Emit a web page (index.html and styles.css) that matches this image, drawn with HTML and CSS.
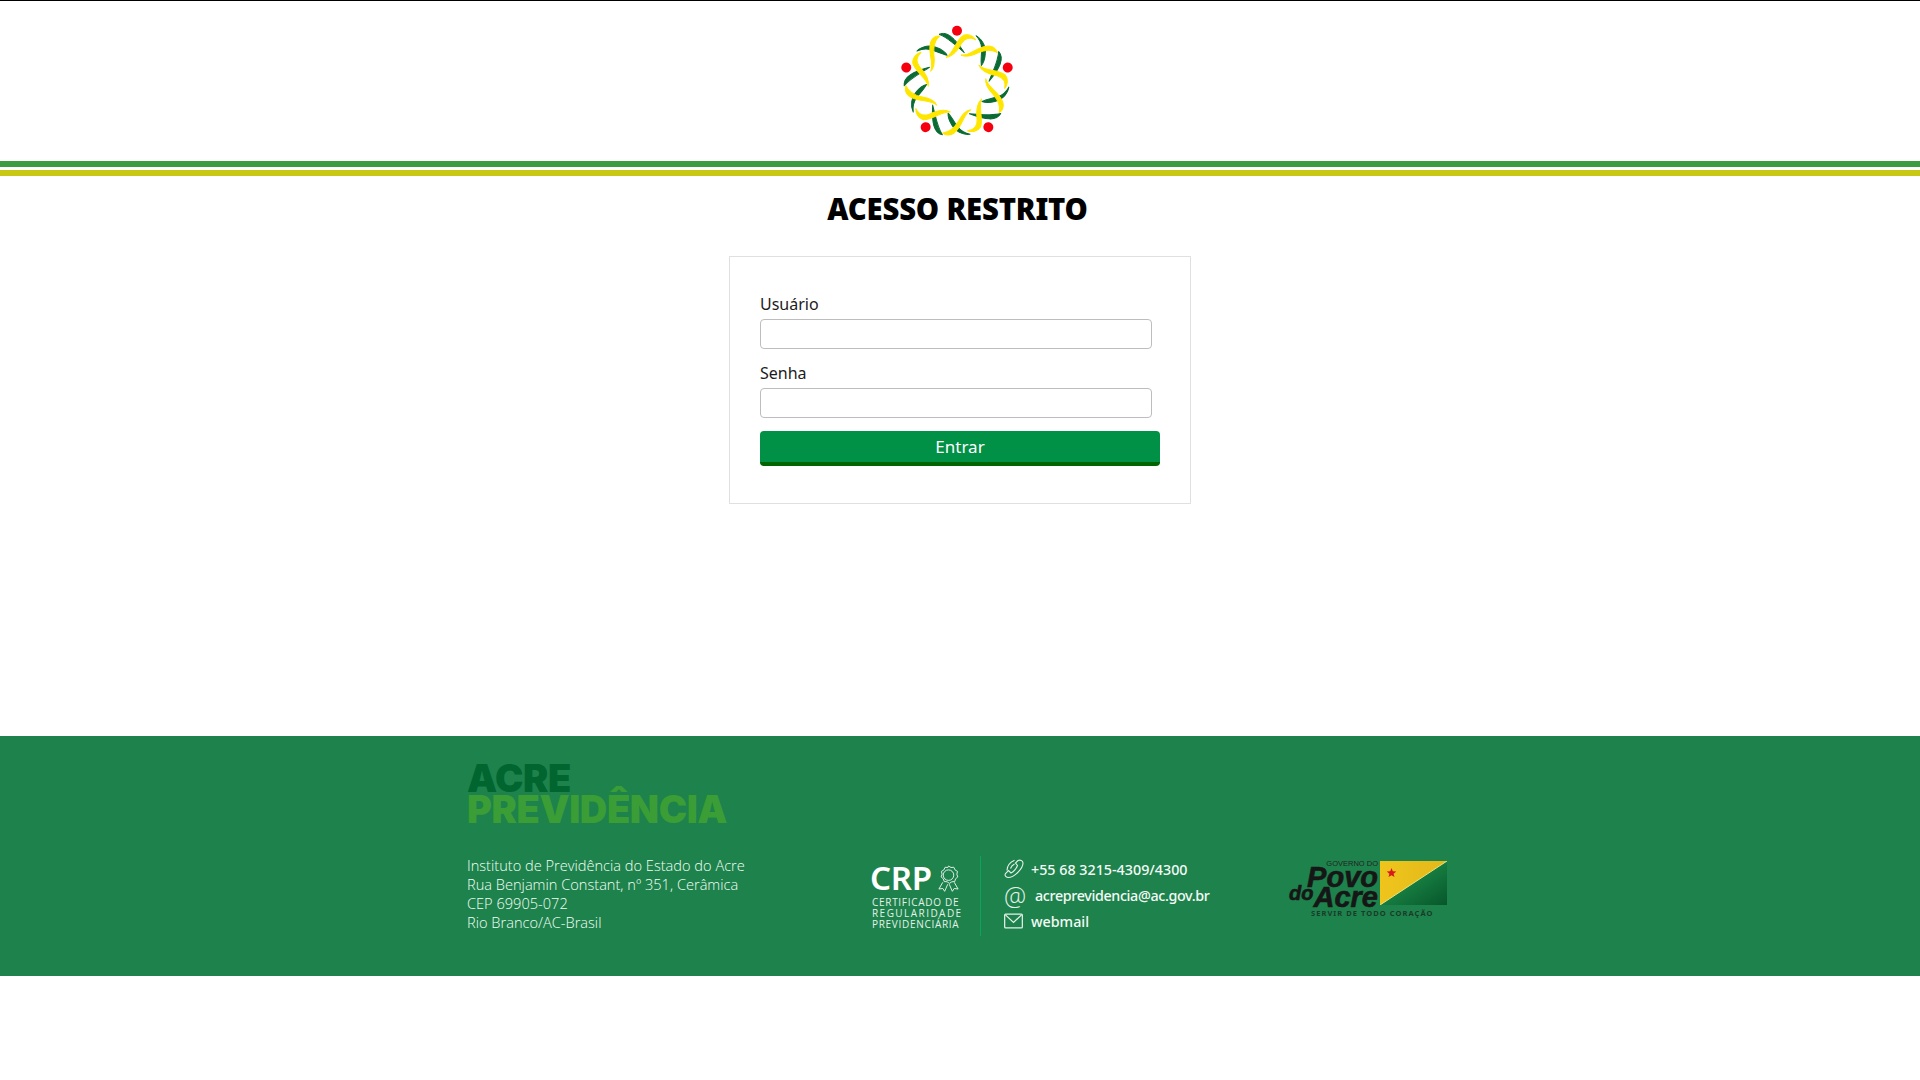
FILE: index.html
```html
<!DOCTYPE html>
<html lang="pt-BR">
<head>
<meta charset="utf-8">
<title>Acesso restrito</title>
<link rel="stylesheet" href="styles.css">
</head>
<body>
<header class="top">
  <svg class="emblem" viewBox="111 72 360 360" aria-hidden="true">
    <defs>
      <g id="sector">
        <path class="rib-g" d="M237 103C262 92 285 115 313 158C285 135 262 112 237 103Z"/>
        <path class="rib-y" d="M258 172C280 160 288 120 310 106C325 100 340 108 348 120C330 110 315 115 305 130C295 148 280 170 258 172Z"/>
        <path class="rib-g" d="M348 107C368 118 378 140 376 160C375 178 370 190 364 197C362 180 365 160 365 145C364 130 358 118 348 107Z"/>
        <path class="rib-y" d="M303 165C330 168 350 140 385 138C400 138 410 148 412 158C395 148 375 150 355 158C335 168 315 172 303 165Z"/>
        <circle fill="#f5000f" cx="291" cy="92" r="15"/>
      </g>
    </defs>
    <use href="#sector"/>
    <use href="#sector" transform="rotate(72 291 252)"/>
    <use href="#sector" transform="rotate(144 291 252)"/>
    <use href="#sector" transform="rotate(216 291 252)"/>
    <use href="#sector" transform="rotate(288 291 252)"/>
  </svg>
</header>
<div class="stripes"><div class="stripe-green"></div><div class="stripe-yellow"></div></div>
<main class="main">
  <h1 class="title">ACESSO RESTRITO</h1>
  <form class="card">
    <label class="label" for="usuario">Usuário</label>
    <input class="field" id="usuario" type="text">
    <label class="label label-next" for="senha">Senha</label>
    <input class="field" id="senha" type="password">
    <button class="submit" type="button">Entrar</button>
  </form>
</main>
<footer class="footer">
  <div class="col-about">
    <div class="brand"><span class="brand-a">ACRE</span><span class="brand-b">PREVIDÊNCIA</span></div>
    <p class="address">Instituto de Previdência do Estado do Acre<br>Rua Benjamin Constant, nº 351, Cerâmica<br>CEP 69905-072<br>Rio Branco/AC-Brasil</p>
  </div>
  <div class="col-crp">
    <div class="crp-head">
      <span class="crp-name">CRP</span>
      <svg class="rosette" viewBox="0 0 24 28" aria-hidden="true">
        <g fill="none" stroke="#e4f2ea" stroke-width="1">
          <path d="M12 1l2.6 1.5 3-.2 1.2 2.7 2.6 1.6-.7 2.9 1 2.9-2.3 1.9-.9 2.9-3 .2-2.5 1.7-2.5-1.7-3-.2-.9-2.9-2.3-1.9 1-2.9-.7-2.9 2.6-1.6 1.2-2.7 3 .2z"/>
          <circle cx="12" cy="10.5" r="5.5"/>
          <path d="M6 18l-4 7 4-.6 2 3 3.2-7.4M18 18l4 7-4-.6-2 3-3.2-7.4"/>
        </g>
      </svg>
    </div>
    <div class="crp-sub"><span>CERTIFICADO DE</span><span class="crp-wide">REGULARIDADE</span><span>PREVIDENCIÁRIA</span></div>
  </div>
  <ul class="contacts">
    <li class="contact">
      <svg class="contact-icon" viewBox="0 0 20 20" aria-hidden="true"><path fill="none" stroke="#e4f2ea" stroke-width="1.100" d="M14 1.500C16 .5 19 1.500 19 4C19 9 11 18.500 4 18.500C1.500 18.500 .5 16 1.500 14.500L4.500 11.500L7 14C10 12.500 12.500 9 13.500 6.500L11.500 4ZM3 11.500C3 7 6.500 3 10.500 1.200M6.500 9.500C7.200 7.500 8.500 6 10.500 5"/></svg>
      <span>+55 68 3215-4309/4300</span>
    </li>
    <li class="contact">
      <span class="contact-at">@</span>
      <span class="contact-mail">acreprevidencia@ac.gov.br</span>
    </li>
    <li class="contact">
      <svg class="contact-icon contact-env" viewBox="0 0 20 16" aria-hidden="true"><rect x=".7" y=".7" width="18.600" height="14.600" rx="1" fill="none" stroke="#e4f2ea" stroke-width="1.300"/><path d="M1.500 1.500L10 9.500L18.500 1.500" fill="none" stroke="#e4f2ea" stroke-width="1.300"/></svg>
      <span>webmail</span>
    </li>
  </ul>
  <div class="gov">
    <div class="gov-words">
      <span class="gov-top">GOVERNO DO</span>
      <span class="gov-povo">Povo</span>
      <span class="gov-acre"><small class="gov-do">do</small>Acre</span>
    </div>
    <svg class="flag" viewBox="0 0 67 44" aria-hidden="true">
      <defs>
        <linearGradient id="flag-g" x1="0" y1="0" x2="1" y2="1"><stop offset=".45" stop-color="#178042"/><stop offset="1" stop-color="#07562b"/></linearGradient>
        <linearGradient id="flag-y" x1="0" y1="0" x2="1" y2="0"><stop offset="0" stop-color="#efc51c"/><stop offset="1" stop-color="#e3b81a"/></linearGradient>
      </defs>
      <rect width="67" height="44" fill="url(#flag-g)"/>
      <path d="M0 0H67L0 44Z" fill="url(#flag-y)"/>
      <path d="M0 44L67 0" stroke="#e9e27a" stroke-width="1"/>
      <path d="M11.500 7l1.300 3.300 3.500.2-2.700 2.200.9 3.400-3-1.900-3 1.900.9-3.400-2.700-2.200 3.500-.2z" fill="#d8181d"/>
    </svg>
    <span class="gov-motto">SERVIR DE TODO CORAÇÃO</span>
  </div>
</footer>
</body>
</html>
```
FILE: styles.css
```css
* { box-sizing: border-box; }
html, body { margin: 0; padding: 0; }
body { background: #fff; font-family: "Noto Sans", "Open Sans", sans-serif; color: #111; border-top: 1px solid #000; }
.top { height: 160px; display: flex; justify-content: center; align-items: flex-start; padding: 23px 6px 0 0; }
.emblem { width: 120px; height: 120px; }
.rib-g { fill: #0b6b34; stroke: #0b6b34; stroke-width: 3; stroke-linejoin: round; }
.rib-y { fill: #ffe600; stroke: #ffe600; stroke-width: 3; stroke-linejoin: round; }
.stripes { display: flex; flex-direction: column; gap: 3px; }
.stripe-green { height: 6px; background: #3d9b3f; }
.stripe-yellow { height: 6px; background: #c8c814; }
.main { height: 560px; display: flex; flex-direction: column; align-items: center; }
.title { margin: 12px 5px 0 0; font-size: 29.300px; line-height: 42px; font-weight: 900; color: #000; letter-spacing: -.2px; }
.card { margin-top: 26px; width: 462px; height: 248px; border: 1px solid #e0e0e0; padding: 34px 30px 0; display: flex; flex-direction: column; align-items: flex-start; }
.label { font-size: 16px; line-height: 26px; height: 28px; color: #1c1c1c; }
.label-next { margin-top: 11px; }
.field { width: 392px; height: 30px; border: 1px solid #bdbdbd; border-radius: 4px; background: #fff; padding: 0 8px; }
.submit { margin-top: 13px; width: 400px; height: 35px; border: 0; border-bottom: 4px solid #006400; border-radius: 4px; background: #009046; color: #fff; font: 400 17px/31px "Noto Sans", sans-serif; padding: 0; }
.footer { height: 240px; background: #1e824c; display: grid; grid-template-columns: 405px 109px 307px 160px; padding-left: 467px; align-items: start; }
.col-about { padding-top: 27px; }
.brand { display: flex; flex-direction: column; font-family: Inter, sans-serif; font-weight: 900; font-size: 38px; line-height: 31px; letter-spacing: -.4px; }
.brand-a { color: #00652f; }
.brand-b { color: #3a9d35; }
.address { margin: 31px 0 0; font-family: "Open Sans", sans-serif; font-weight: 300; font-size: 14.600px; line-height: 19px; color: #f2fff6; }
.col-crp { margin-top: 120px; height: 80px; border-right: 1px solid #0fa35a; color: #f2f8f4; padding-top: 6px; margin-left: -2px; }
.crp-head { display: flex; align-items: center; gap: 5px; }
.crp-name { font-size: 33px; line-height: 32px; font-weight: 600; color: #fff; letter-spacing: -.3px; }
.rosette { width: 23px; height: 27px; }
.crp-sub { display: flex; flex-direction: column; font-family: "Open Sans", sans-serif; font-size: 10px; line-height: 11px; margin: 3px 0 0 2px; letter-spacing: .7px; color: #e4f2ea; white-space: nowrap; }
.crp-wide { letter-spacing: 1.450px; }
.contacts { list-style: none; margin: 120px 0 0; padding: 0 0 0 23px; }
.contact { display: flex; align-items: center; gap: 7px; height: 26px; font-size: 14.300px; font-weight: 500; color: #f4fbf6; white-space: nowrap; }
.contact-icon { width: 20px; height: 20px; flex: none; }
.contact-env { width: 19px; margin-right: 1px; }
.contact-at { width: 20px; flex: none; font-family: "Open Sans", sans-serif; font-weight: 300; font-size: 25px; line-height: 24px; text-align: center; color: #e4f2ea; }
.contact-mail { margin-left: 4px; letter-spacing: -.35px; }
.gov { margin-top: 124px; position: relative; height: 60px; }
.gov-words { display: flex; flex-direction: column; align-items: flex-end; width: 90px; color: #161616; font-family: "Liberation Sans", sans-serif; font-weight: 700; font-style: italic; -webkit-text-stroke: .6px #161616; }
.gov-top { font-size: 7.500px; line-height: 7px; font-style: normal; font-weight: 400; color: #222; -webkit-text-stroke: 0; }
.gov-povo { font-size: 29px; line-height: 20px; }
.gov-acre { font-size: 29px; line-height: 20px; }
.gov-do { font-size: 20px; position: relative; top: -7px; }
.flag { position: absolute; left: 92px; top: 1px; width: 67px; height: 44px; }
.gov-motto { position: absolute; left: 23px; top: 49px; font-size: 7.500px; line-height: 9px; font-weight: 700; letter-spacing: 1.050px; color: #1a3b2a; white-space: nowrap; }
```
